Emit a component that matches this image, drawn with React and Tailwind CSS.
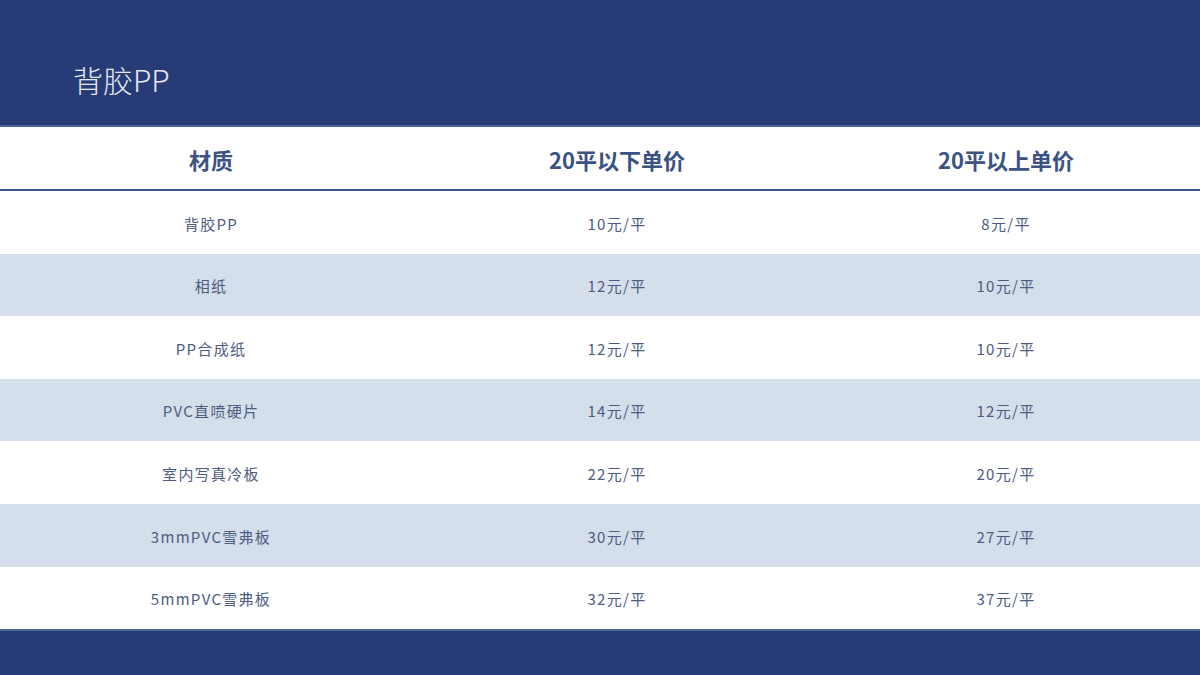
import React from "react";

const rows = [
  ["背胶PP", "10元/平", "8元/平"],
  ["相纸", "12元/平", "10元/平"],
  ["PP合成纸", "12元/平", "10元/平"],
  ["PVC直喷硬片", "14元/平", "12元/平"],
  ["室内写真冷板", "22元/平", "20元/平"],
  ["3mmPVC雪弗板", "30元/平", "27元/平"],
  ["5mmPVC雪弗板", "32元/平", "37元/平"],
];

const font = { fontFamily: '"Noto Sans CJK SC", "Noto Sans", sans-serif' };

export default function App() {
  return (
    <div className="w-[1200px] h-[675px] flex flex-col bg-white overflow-hidden" style={font}>
      {/* top band */}
      <div className="h-[127px] shrink-0 bg-[#273c76] border-b-2 border-[#4b6193] pl-[73px] pt-[64px]">
        <h1 className="text-[30px] font-light text-[#e6e9f1] leading-none">背胶PP</h1>
      </div>

      {/* header */}
      <div className="h-[64px] shrink-0 grid grid-cols-[422px_390px_388px] items-center border-b-2 border-[#3d5587] text-[#3b5284] text-[22px] font-bold pt-[2px]">
        <div className="text-center">材质</div>
        <div className="text-center">20平以下单价</div>
        <div className="text-center">20平以上单价</div>
      </div>

      {/* body */}
      <div className="flex flex-col">
        {rows.map((r, i) => (
          <div
            key={i}
            className={`h-[62.6px] grid grid-cols-[422px_390px_388px] items-center pt-[3px] text-[15px] tracking-[1.3px] text-[#4d5c80] ${
              i % 2 === 1 ? "bg-[#d5deeb]" : "bg-white"
            }`}
          >
            <div className="text-center">{r[0]}</div>
            <div className="text-center">{r[1]}</div>
            <div className="text-center">{r[2]}</div>
          </div>
        ))}
      </div>

      {/* bottom band */}
      <div className="flex-1 bg-[#273c76] border-t-2 border-[#4b6193]" />
    </div>
  );
}
